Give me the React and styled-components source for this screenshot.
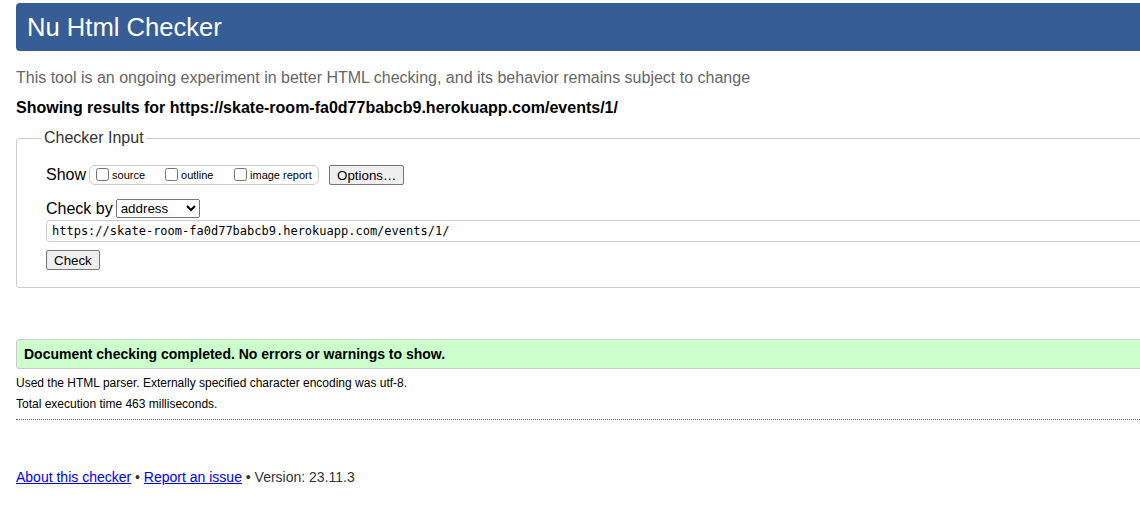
import React from 'react'
import styled, { createGlobalStyle } from 'styled-components'

const Global = createGlobalStyle`
  html, body {
    margin: 0;
    padding: 0;
    background: #fff;
    overflow: hidden;
  }
  body {
    font-family: 'Liberation Sans', Arial, sans-serif;
    color: #000;
  }
`

const Page = styled.div`
  width: 1200px;
  padding: 3px 0 0 16px;
`

const Header = styled.h1`
  margin: 0;
  height: 48px;
  display: flex;
  align-items: center;
  padding-left: 11px;
  background: #365d95;
  border-radius: 4px;
  color: #fff;
  font-size: 25.6px;
  font-weight: normal;
`

const Intro = styled.p`
  margin: 18px 0 0;
  font-size: 16px;
  line-height: 18px;
  color: #666;
`

const ShowingFor = styled.p`
  margin: 12px 0 0;
  font-size: 16px;
  line-height: 18px;
  font-weight: bold;
  color: #000;
`

const InputBox = styled.fieldset`
  margin: 12px 0 0;
  padding: 18px 29px 17px;
  border: 1px solid #ccc;
  border-radius: 3px;
`

const Legend = styled.legend`
  margin-left: -4px;
  padding: 0 2px;
  font-size: 16px;
  line-height: 18px;
  color: #333;
`

const Row = styled.div`
  display: flex;
  align-items: center;
  margin-top: ${p => p.top || 0}px;
  font-size: 16px;
`

const Label = styled.span`
  color: #000;
  margin-right: ${p => p.gap || 0}px;
`

const ShowGroup = styled.div`
  display: flex;
  align-items: center;
  height: 18px;
  padding: 0 4px 0 6px;
  border: 1px solid #ccc;
  border-radius: 6px;
`

const Option = styled.label`
  display: flex;
  align-items: center;
  font-size: 11px;
  color: #000;
  width: ${p => p.w}px;
  input {
    margin: 0 3px 1px 0;
    width: 13px;
    height: 13px;
  }
`

const Button = styled.button`
  font-family: 'Liberation Sans', Arial, sans-serif;
  font-size: 13.33px;
  height: 20px;
  padding: 0 7px;
  margin-left: ${p => p.gap || 0}px;
  background: #efefef;
  border: 1px solid #767676;
  border-radius: 2px;
  color: #000;
`

const Select = styled.select`
  font-family: 'Liberation Sans', Arial, sans-serif;
  font-size: 13.33px;
  width: 84px;
  height: 19px;
  margin-left: 3px;
  color: #000;
`

const UrlInput = styled.input`
  display: block;
  box-sizing: border-box;
  width: 100%;
  height: 22px;
  margin-top: 2px;
  padding: 0 5px;
  border: 1px solid #ccc;
  border-radius: 4px;
  font-family: 'DejaVu Sans Mono', 'Liberation Mono', monospace;
  font-size: 12px;
  color: #000;
`

const Success = styled.p`
  margin: 51px 0 0;
  height: 28px;
  display: flex;
  align-items: center;
  padding-left: 7px;
  background: #ccffcc;
  border: 1px solid #ccc;
  border-radius: 3px;
  font-size: 14px;
  font-weight: bold;
`

const Detail = styled.p`
  margin: ${p => p.top}px 0 0;
  font-size: 12px;
  line-height: 14px;
  color: #000;
`

const Rule = styled.hr`
  margin: 8px 0 0;
  border: 0;
  border-top: 1px dotted #666;
`

const Footer = styled.p`
  margin: 49px 0 0;
  font-size: 14px;
  line-height: 16px;
  color: #333;
  a {
    color: #0000ee;
  }
`

export default function App() {
  const url = 'https://skate-room-fa0d77babcb9.herokuapp.com/events/1/'
  return (
    <Page>
      <Global />
      <Header>Nu Html Checker</Header>
      <Intro>
        This tool is an ongoing experiment in better HTML checking, and its behavior remains subject to change
      </Intro>
      <ShowingFor>Showing results for {url}</ShowingFor>
      <InputBox>
        <Legend>Checker Input</Legend>
        <Row>
          <Label gap={3}>Show</Label>
          <ShowGroup>
            <Option w={69}><input type="checkbox" />source</Option>
            <Option w={69}><input type="checkbox" />outline</Option>
            <Option w={80}><input type="checkbox" />image report</Option>
          </ShowGroup>
          <Button gap={10}>Options…</Button>
        </Row>
        <Row top={14}>
          <Label>Check by</Label>
          <Select defaultValue="address">
            <option value="address">address</option>
          </Select>
        </Row>
        <UrlInput defaultValue={url} readOnly />
        <Row top={8}>
          <Button>Check</Button>
        </Row>
      </InputBox>
      <Success>Document checking completed. No errors or warnings to show.</Success>
      <Detail top={7}>Used the HTML parser. Externally specified character encoding was utf-8.</Detail>
      <Detail top={7}>Total execution time 463 milliseconds.</Detail>
      <Rule />
      <Footer>
        <a href="#about">About this checker</a> • <a href="#report">Report an issue</a> • Version: 23.11.3
      </Footer>
    </Page>
  )
}
